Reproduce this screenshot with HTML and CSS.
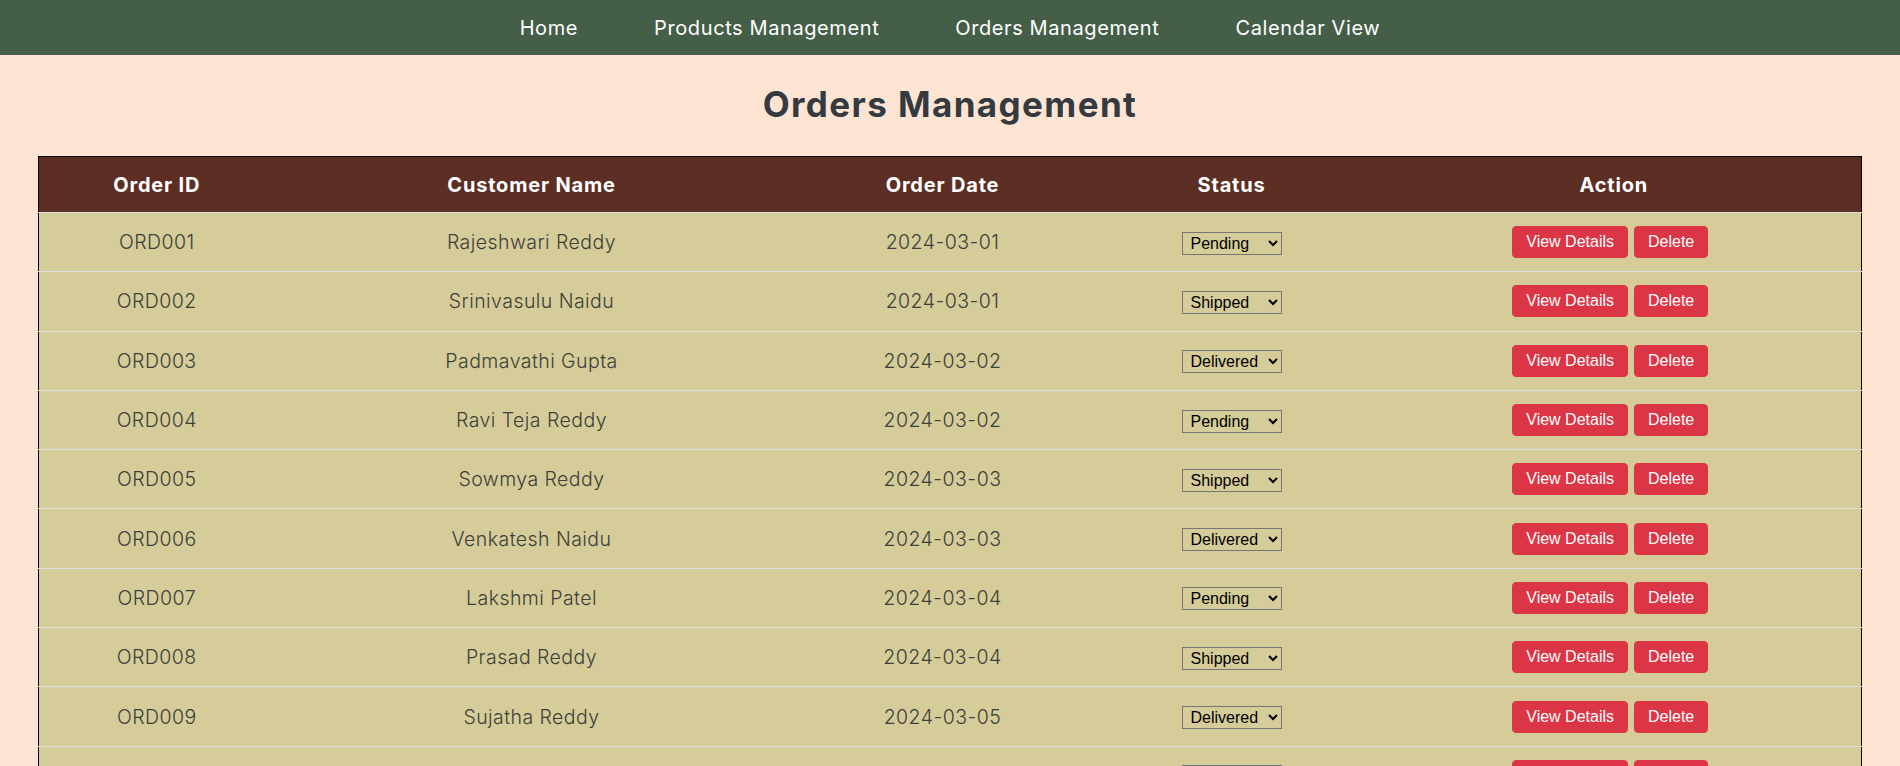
FILE: index.html
```html
<!DOCTYPE html>
<html lang="en">
<head>
<meta charset="utf-8">
<title>Orders Management</title>
<link rel="stylesheet" href="styles.css">
</head>
<body>
<nav class="topnav">
  <a class="nav-link" href="#">Home</a>
  <a class="nav-link" href="#">Products Management</a>
  <a class="nav-link" href="#">Orders Management</a>
  <a class="nav-link" href="#">Calendar View</a>
</nav>
<main class="page">
  <h1 class="page-title">Orders Management</h1>
  <table class="orders">
    <colgroup>
      <col class="c-id"><col class="c-name"><col class="c-date"><col class="c-status"><col class="c-action">
    </colgroup>
    <thead>
      <tr><th>Order ID</th><th>Customer Name</th><th>Order Date</th><th>Status</th><th>Action</th></tr>
    </thead>
    <tbody>
      <tr><td>ORD001</td><td>Rajeshwari Reddy</td><td>2024-03-01</td>
        <td><select class="status"><option selected>Pending</option><option>Shipped</option><option>Delivered</option></select></td>
        <td><div class="actions"><button class="btn">View Details</button><button class="btn">Delete</button></div></td></tr>
      <tr><td>ORD002</td><td>Srinivasulu Naidu</td><td>2024-03-01</td>
        <td><select class="status"><option>Pending</option><option selected>Shipped</option><option>Delivered</option></select></td>
        <td><div class="actions"><button class="btn">View Details</button><button class="btn">Delete</button></div></td></tr>
      <tr><td>ORD003</td><td>Padmavathi Gupta</td><td>2024-03-02</td>
        <td><select class="status"><option>Pending</option><option>Shipped</option><option selected>Delivered</option></select></td>
        <td><div class="actions"><button class="btn">View Details</button><button class="btn">Delete</button></div></td></tr>
      <tr><td>ORD004</td><td>Ravi Teja Reddy</td><td>2024-03-02</td>
        <td><select class="status"><option selected>Pending</option><option>Shipped</option><option>Delivered</option></select></td>
        <td><div class="actions"><button class="btn">View Details</button><button class="btn">Delete</button></div></td></tr>
      <tr><td>ORD005</td><td>Sowmya Reddy</td><td>2024-03-03</td>
        <td><select class="status"><option>Pending</option><option selected>Shipped</option><option>Delivered</option></select></td>
        <td><div class="actions"><button class="btn">View Details</button><button class="btn">Delete</button></div></td></tr>
      <tr><td>ORD006</td><td>Venkatesh Naidu</td><td>2024-03-03</td>
        <td><select class="status"><option>Pending</option><option>Shipped</option><option selected>Delivered</option></select></td>
        <td><div class="actions"><button class="btn">View Details</button><button class="btn">Delete</button></div></td></tr>
      <tr><td>ORD007</td><td>Lakshmi Patel</td><td>2024-03-04</td>
        <td><select class="status"><option selected>Pending</option><option>Shipped</option><option>Delivered</option></select></td>
        <td><div class="actions"><button class="btn">View Details</button><button class="btn">Delete</button></div></td></tr>
      <tr><td>ORD008</td><td>Prasad Reddy</td><td>2024-03-04</td>
        <td><select class="status"><option>Pending</option><option selected>Shipped</option><option>Delivered</option></select></td>
        <td><div class="actions"><button class="btn">View Details</button><button class="btn">Delete</button></div></td></tr>
      <tr><td>ORD009</td><td>Sujatha Reddy</td><td>2024-03-05</td>
        <td><select class="status"><option>Pending</option><option>Shipped</option><option selected>Delivered</option></select></td>
        <td><div class="actions"><button class="btn">View Details</button><button class="btn">Delete</button></div></td></tr>
      <tr><td>ORD010</td><td>Kiran Kumar</td><td>2024-03-05</td>
        <td><select class="status"><option selected>Pending</option><option>Shipped</option><option>Delivered</option></select></td>
        <td><div class="actions"><button class="btn">View Details</button><button class="btn">Delete</button></div></td></tr>
    </tbody>
  </table>
</main>
</body>
</html>
```
FILE: styles.css
```css
html, body {
  margin: 0;
  padding: 0;
}
body {
  background: #fde4d3;
  font-family: Inter, "Open Sans", sans-serif;
  color: #333;
}
.topnav {
  height: 55px;
  background: #455e48;
  display: flex;
  justify-content: center;
  align-items: center;
  gap: 76px;
}
.nav-link {
  color: #fff;
  text-decoration: none;
  font-size: 20px;
  letter-spacing: 0.6px;
  font-weight: 400;
}
.page {
  padding-top: 25px;
}
.page-title {
  margin: 0 0 28px;
  text-align: center;
  font-size: 35px;
  letter-spacing: 1.4px;
  line-height: 48px;
  font-weight: 700;
  color: #343a40;
}
.orders {
  width: 96%;
  margin: 0 auto;
  border-collapse: collapse;
  border: 1px solid #000;
  table-layout: fixed;
}
.c-id { width: 236px; }
.c-name { width: 514px; }
.c-date { width: 308px; }
.c-status { width: 270px; }
.orders th {
  background: #5c2e24;
  color: #fff;
  font-weight: 700;
  font-size: 20px;
  letter-spacing: 0.8px;
  height: 55px;
  padding: 0;
  border-bottom: 1px solid #ddd;
  text-align: center;
  vertical-align: middle;
}
.orders td {
  background: #d5cc9a;
  color: #3d4038;
  font-size: 19.5px;
  letter-spacing: 0.45px;
  font-weight: 300;
  height: 58.3px;
  padding: 0;
  border-bottom: 1px solid #ddd;
  text-align: center;
  vertical-align: middle;
}
.status {
  font-family: "Liberation Sans", Arial, sans-serif;
  font-size: 16px;
  letter-spacing: 0;
  color: #000;
  background: transparent;
  border: 1px solid #767676;
  border-radius: 0;
  width: 100px;
  height: 23px;
  padding: 0 0 0 4px;
}
.actions {
  display: flex;
  justify-content: center;
  gap: 6px;
  padding-right: 7px;
}
.btn {
  font-family: "Liberation Sans", Arial, sans-serif;
  font-size: 16px;
  letter-spacing: 0;
  color: #fff;
  background: #dc3545;
  border: 1px solid #dc3545;
  border-radius: 4px;
  padding: 6px 13px;
  line-height: 18px;
  cursor: pointer;
}
```
